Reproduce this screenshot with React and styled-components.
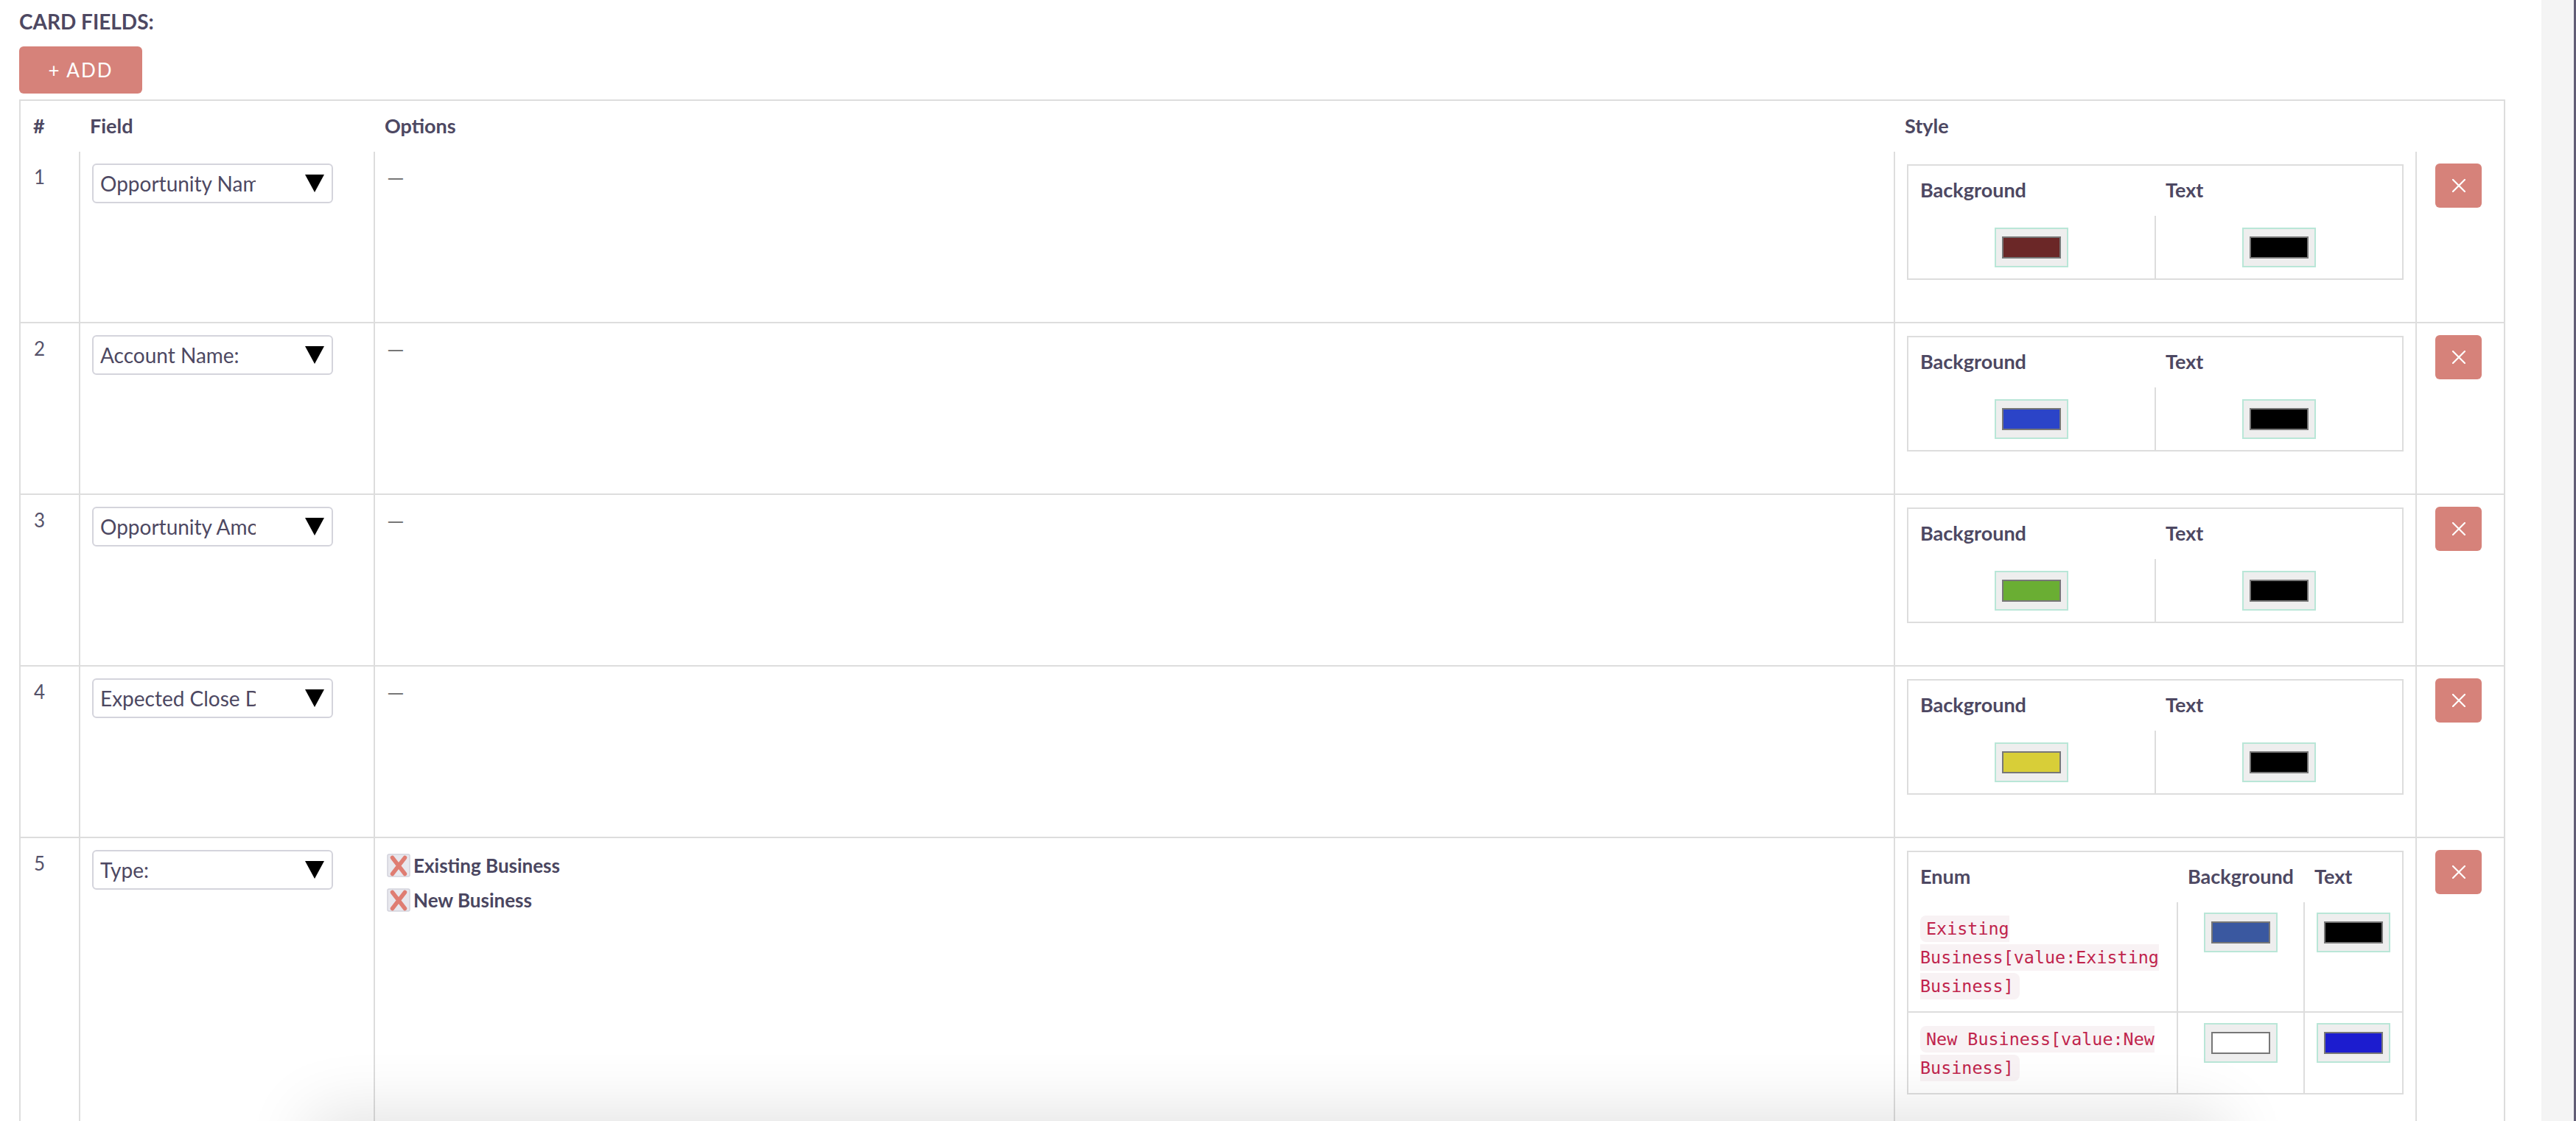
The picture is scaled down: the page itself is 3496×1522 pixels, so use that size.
import React from "react";
import styled, { createGlobalStyle } from "styled-components";

const GlobalStyle = createGlobalStyle`
  html, body {
    margin: 0;
    padding: 0;
    background: #fff;
    overflow: hidden;
  }
  body {
    font-family: Lato, "Open Sans", Arial, sans-serif;
    color: #4d4862;
  }
`;

const Page = styled.div`
  display: flex;
  height: 100vh;
  overflow: hidden;
`;

const Main = styled.div`
  flex: 1;
  min-width: 0;
  padding: 12px 49px 0 26px;
`;

const Gutter = styled.div`
  width: 44px;
  background: #f4f4f4;
  border-right: 3px solid #615d75;
`;

const Title = styled.h3`
  margin: 0;
  font: 700 28px/34px Lato, sans-serif;
  color: #4d4862;
  text-transform: uppercase;
`;

const AddButton = styled.button`
  display: block;
  margin-top: 17px;
  width: 167px;
  height: 64px;
  border: none;
  border-radius: 6px;
  background: #d6827a;
  color: #fff;
  font: 400 26px Lato, sans-serif;
  letter-spacing: 2px;
  cursor: pointer;
`;

const FieldsTable = styled.table`
  margin-top: 8px;
  width: 100%;
  table-layout: fixed;
  border-collapse: collapse;
  border: 2px solid #ddd;
`;

const HeadCell = styled.th`
  text-align: left;
  font: 700 27px/34px Lato, sans-serif;
  color: #4d4862;
  padding: 17px 14px 18px;
`;

const Cell = styled.td`
  vertical-align: top;
  padding: 17px 16px;
  border-bottom: 2px solid #ddd;
  font: 400 26px/34px Lato, sans-serif;
  color: #55526a;

  & + & {
    border-left: 2px solid #ddd;
  }
`;

const NumberText = styled.span`
  padding-left: 2px;
`;

const Select = styled.div`
  display: flex;
  align-items: center;
  box-sizing: border-box;
  width: 327px;
  height: 54px;
  margin-top: -1px;
  padding: 0 10px 0 9px;
  border: 2px solid #d4d4dc;
  border-radius: 6px;
  background: #fff;
`;

const SelectLabel = styled.span`
  flex: 0 0 211px;
  overflow: hidden;
  white-space: nowrap;
  font: 400 28px/34px Lato, sans-serif;
  color: #4d4862;
`;

const Arrow = styled.span`
  margin-left: auto;
  width: 0;
  height: 0;
  border-left: 13.5px solid transparent;
  border-right: 13.5px solid transparent;
  border-top: 24px solid #000;
`;

const Dash = styled.span`
  color: #777;
  font-size: 30px;
`;

const OptionList = styled.ul`
  list-style: none;
  margin: 0;
  padding: 4px 0 0;
`;

const OptionItem = styled.li`
  display: flex;
  align-items: center;
  gap: 4px;
  height: 32px;
  margin-bottom: 15px;
  font: 700 26px/37px Lato, sans-serif;
  color: #4a4660;
`;

const StyleBox = styled.table`
  width: 100%;
  table-layout: fixed;
  border-collapse: collapse;
  border: 2px solid #ddd;
  margin-bottom: 40px;
`;

const BoxHead = styled.th`
  text-align: left;
  font: 700 27px/34px Lato, sans-serif;
  color: #4d4862;
  padding: 16px ${(p) => p.$pad || 16}px 18px;
`;

const BoxCell = styled.td`
  vertical-align: top;
  text-align: ${(p) => (p.$center ? "center" : "left")};
  padding: ${(p) => p.$top || 16}px 16px 15px;
  border-top: 2px solid #ddd;
  font: 400 26px/37px Lato, sans-serif;

  & + & {
    border-left: 2px solid #ddd;
  }

  tr:first-child > & {
    border-top: none;
  }
`;

const Swatch = styled.span`
  display: inline-block;
  vertical-align: top;
  padding: 10px 8px;
  background: #eee;
  border: 2px solid #b9e6d7;
  line-height: 0;
`;

const SwatchFill = styled.span`
  display: block;
  box-sizing: border-box;
  width: 80px;
  height: 30px;
  border: 2px solid #777;
  background: ${(p) => p.$color};
`;

const Code = styled.code`
  font-family: "DejaVu Sans Mono", "Liberation Mono", monospace;
  font-size: 23.4px;
  color: #c0244c;
  background: #f8f2f4;
  padding: 4px 8px;
  border-radius: 8px;
`;

const DeleteButton = styled.button`
  display: flex;
  align-items: center;
  justify-content: center;
  width: 63px;
  height: 60px;
  margin: -1px 0 0 9px;
  padding: 0;
  border: none;
  border-radius: 6px;
  background: #d6827a;
  cursor: pointer;
`;

const BottomShade = styled.div`
  position: fixed;
  left: 430px;
  width: 2580px;
  bottom: -200px;
  height: 200px;
  background: #fff;
  box-shadow: 0 0 90px 10px rgba(0, 0, 0, 0.12);
  pointer-events: none;
`;

const CloseIcon = () => (
  <svg width="18" height="18" viewBox="0 0 18 18">
    <path d="M1 1L17 17M17 1L1 17" stroke="#fff" strokeWidth="2.2" strokeLinecap="round" />
  </svg>
);

const RemovedIcon = () => (
  <svg width="32" height="32" viewBox="0 0 32 32">
    <rect x="1" y="1" width="30" height="30" rx="2" fill="#e8e8ee" stroke="#d2d2dc" strokeWidth="1.5" />
    <path d="M7.5 5.5L24.5 27.5M24.5 5.5L7.5 27.5" stroke="#df7d72" strokeWidth="5.5" strokeLinecap="round" />
  </svg>
);

const fields = [
  { id: 1, label: "Opportunity Name:", bg: "#6b2727", text: "#000" },
  { id: 2, label: "Account Name:", bg: "#2b44c8", text: "#000" },
  { id: 3, label: "Opportunity Amount:", bg: "#6aae33", text: "#000" },
  { id: 4, label: "Expected Close Date:", bg: "#d8ce38", text: "#000" },
  {
    id: 5,
    label: "Type:",
    options: ["Existing Business", "New Business"],
    enums: [
      { name: "Existing Business", value: "Existing Business", bg: "#3a58a0", text: "#000" },
      { name: "New Business", value: "New Business", bg: "#ffffff", text: "#1c1ccf" },
    ],
  },
];

const ColorPick = ({ color }) => (
  <Swatch>
    <SwatchFill $color={color} />
  </Swatch>
);

const PlainStyle = ({ field }) => (
  <StyleBox>
    <thead>
      <tr>
        <BoxHead>Background</BoxHead>
        <BoxHead $pad={14}>Text</BoxHead>
      </tr>
    </thead>
    <tbody>
      <tr>
        <BoxCell $center>
          <ColorPick color={field.bg} />
        </BoxCell>
        <BoxCell $center>
          <ColorPick color={field.text} />
        </BoxCell>
      </tr>
    </tbody>
  </StyleBox>
);

const EnumStyle = ({ enums }) => (
  <StyleBox>
    <colgroup>
      <col style={{ width: 366 }} />
      <col style={{ width: 172 }} />
      <col />
    </colgroup>
    <thead>
      <tr>
        <BoxHead>Enum</BoxHead>
        <BoxHead $pad={14}>Background</BoxHead>
        <BoxHead $pad={14}>Text</BoxHead>
      </tr>
    </thead>
    <tbody>
      {enums.map((e) => (
        <tr key={e.name}>
          <BoxCell>
            <Code>{`${e.name}[value:${e.value}]`}</Code>
          </BoxCell>
          <BoxCell $center $top={14}>
            <ColorPick color={e.bg} />
          </BoxCell>
          <BoxCell $center $top={14}>
            <ColorPick color={e.text} />
          </BoxCell>
        </tr>
      ))}
    </tbody>
  </StyleBox>
);

const FieldRow = ({ field }) => (
  <tr>
    <Cell>
      <NumberText>{field.id}</NumberText>
    </Cell>
    <Cell>
      <Select>
        <SelectLabel>{field.label}</SelectLabel>
        <Arrow />
      </Select>
    </Cell>
    <Cell>
      {field.options ? (
        <OptionList>
          {field.options.map((o) => (
            <OptionItem key={o}>
              <RemovedIcon />
              {o}
            </OptionItem>
          ))}
        </OptionList>
      ) : (
        <Dash>—</Dash>
      )}
    </Cell>
    <Cell>
      {field.enums ? <EnumStyle enums={field.enums} /> : <PlainStyle field={field} />}
    </Cell>
    <Cell>
      <DeleteButton>
        <CloseIcon />
      </DeleteButton>
    </Cell>
  </tr>
);

export default function App() {
  return (
    <>
      <GlobalStyle />
      <Page>
        <Main>
          <Title>Card Fields:</Title>
          <AddButton>+ ADD</AddButton>
          <FieldsTable>
            <colgroup>
              <col style={{ width: 81 }} />
              <col style={{ width: 400 }} />
              <col />
              <col style={{ width: 708 }} />
              <col style={{ width: 120 }} />
            </colgroup>
            <thead>
              <tr>
                <HeadCell style={{ paddingLeft: 17 }}>#</HeadCell>
                <HeadCell>Field</HeadCell>
                <HeadCell>Options</HeadCell>
                <HeadCell>Style</HeadCell>
                <HeadCell />
              </tr>
            </thead>
            <tbody>
              {fields.map((f) => (
                <FieldRow key={f.id} field={f} />
              ))}
            </tbody>
          </FieldsTable>
        </Main>
        <Gutter />
      </Page>
      <BottomShade />
    </>
  );
}
